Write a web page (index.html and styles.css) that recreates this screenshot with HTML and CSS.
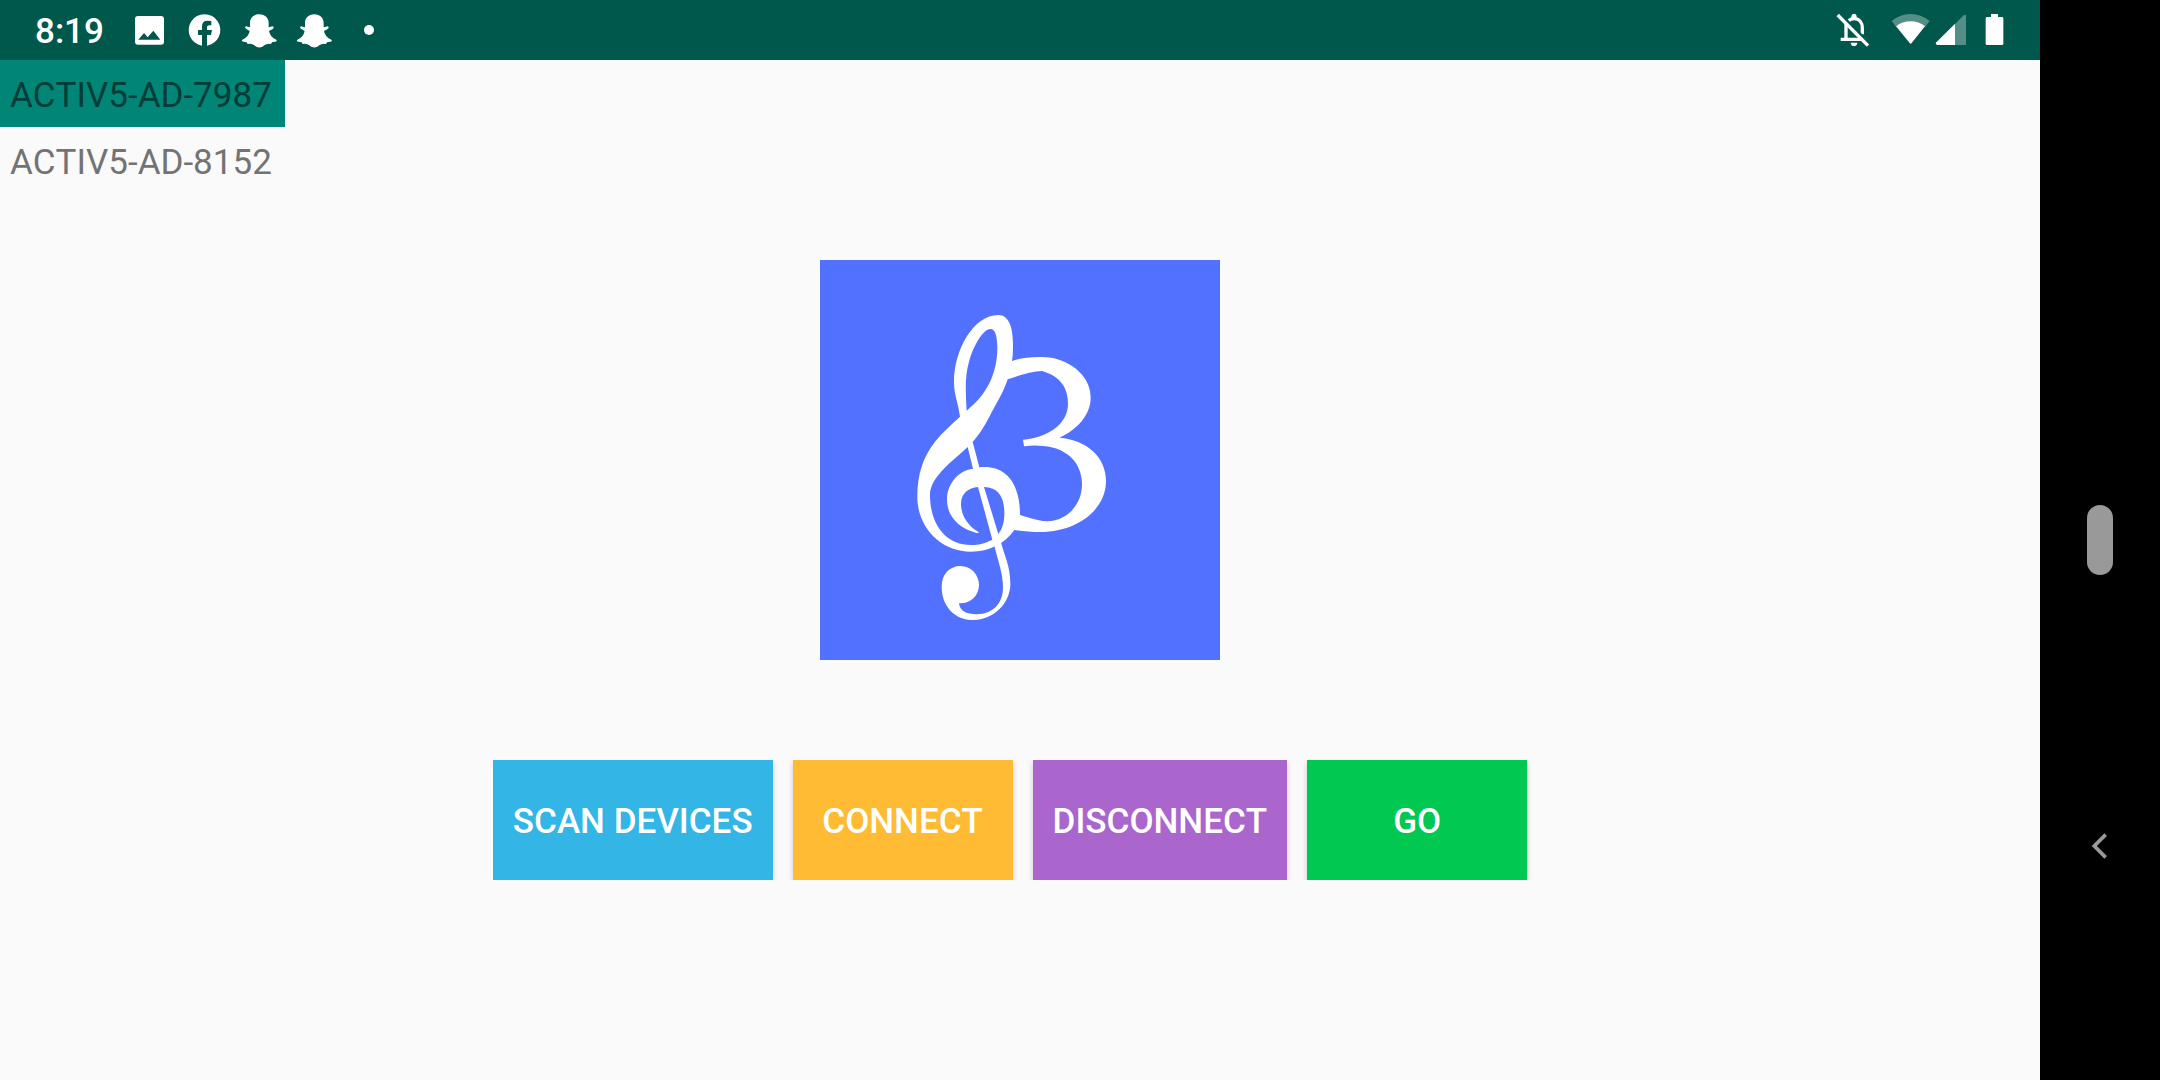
FILE: index.html
```html
<!DOCTYPE html>
<html lang="en">
<head>
    <meta charset="UTF-8">
    <meta name="viewport" content="width=device-width, initial-scale=1.0">
    <title>Activ5 Devices</title>
    <link rel="stylesheet" href="styles.css">
</head>
<body>

<div class="screen">
    <!-- Status bar -->
    <header class="status-bar">
        <span class="clock">8:19</span>
        <div class="notifications">
            <svg viewBox="366 0 165 180" aria-label="Picture">
                <path fill="#fff" fill-rule="evenodd" d="M414 48H483Q492 48 492 57V125Q492 134 483 134H414Q405 134 405 125V57Q405 48 414 48ZM415 119H481L460 92L443 112L432 99Z"/>
            </svg>
            <svg viewBox="531 0 165 180" aria-label="Facebook">
                <path fill="#fff" d="M606 137A47.500 47.500 0 1 1 621 137V105H633L636 90H621V83Q621 76 629 76H634V63Q628 62 622 62Q606 62 606 79V90H594V105H606Z"/>
            </svg>
            <svg viewBox="696 0 165 180" aria-label="Snapchat">
                <path fill="#fff" d="M778 43C761 43 750 54 750 69V82L738 79Q732 83 740 88L749 93C747 105 739 114 727 119Q723 123 730 125L740 127L743 132Q756 130 763 136C773 145 783 145 793 136Q800 130 813 132L816 127L826 125Q833 123 829 119C817 114 809 105 807 93L818 87Q824 82 818 79L806 82V69C806 54 795 43 778 43Z"/>
            </svg>
            <svg viewBox="696 0 165 180" aria-label="Snapchat">
                <path fill="#fff" d="M778 43C761 43 750 54 750 69V82L738 79Q732 83 740 88L749 93C747 105 739 114 727 119Q723 123 730 125L740 127L743 132Q756 130 763 136C773 145 783 145 793 136Q800 130 813 132L816 127L826 125Q833 123 829 119C817 114 809 105 807 93L818 87Q824 82 818 79L806 82V69C806 54 795 43 778 43Z"/>
            </svg>
            <svg viewBox="1026 0 165 180" aria-label="More">
                <circle cx="1107" cy="90" r="15" fill="#fff"/>
            </svg>
        </div>
        <div class="system">
            <svg class="bell" viewBox="100 0 120 180" aria-label="Notifications off">
                <path fill="none" stroke="#fff" stroke-width="10" d="M139 72V118M123 118H190M147 62Q154 56 163 56C180 56 188 69 188 84V103"/>
                <path fill="#fff" d="M155 58V48Q157 41 163 41Q170 41 171 48V58ZM153 128H173Q172 138 163 138Q154 138 153 128Z"/>
                <path stroke="#00574b" stroke-width="7" d="M122 42L213 133"/>
                <path stroke="#fff" stroke-width="10" d="M114 45L205 137"/>
            </svg>
            <svg class="wifi" viewBox="270 0 123 180" aria-label="Wifi">
                <path fill="#fff" opacity=".33" d="M275 63Q300 42 332 42Q363 42 389 63L375 81Q332 50 288 80Z"/>
                <path fill="#fff" d="M288 79Q307 64 332 64Q356 64 375 79L335 129Q332 133 329 129Z"/>
            </svg>
            <svg class="signal" viewBox="402 0 102 180" aria-label="Signal">
                <path fill="#fff" opacity=".33" d="M465 72L491 46Q498 41 498 48V135H465Z"/>
                <path fill="#fff" d="M465 71V135H412Q405 133 409 127Z"/>
            </svg>
            <svg class="battery" viewBox="546 0 75 180" aria-label="Battery">
                <path fill="#fff" d="M573 42H594V51H606Q610 51 610 55V131Q610 135 606 135H561Q557 135 557 131V55Q557 51 561 51H573Z"/>
            </svg>
        </div>
    </header>

    <main class="content">
        <!-- Found devices -->
        <div class="devices">
            <button class="device selected">ACTIV5-AD-7987</button>
            <button class="device">ACTIV5-AD-8152</button>
        </div>

        <div class="panel">
            <svg class="logo" viewBox="30 30 1200 1200" aria-label="Logo">
                <g fill="#fff">
                    <!-- upper loop and outer body of the clef -->
                    <path fill-rule="evenodd" d="M450 500C444 455 432 435 432 395C432 300 490 195 565 195C600 195 610 240 609 290Q609 315 606 333C630 325 655 321 685 321C720 321 740 325 765 336C810 357 842 395 842 443C842 495 800 540 748 563C830 570 888 620 888 693C888 780 800 846 692 846C665 846 640 843 613 840C585 880 540 905 482 905C395 905 322 835 322 740C322 670 340 620 375 575C397 547 425 523 450 500ZM470 482C530 435 563 370 562 290C561 255 555 237 541 237C520 237 492 285 479 328C463 380 467 430 470 482ZM593 388C582 423 563 454 545 487C529 518 512 550 488 576L508 652C580 644 630 690 630 795L660 804C680 809 695 814 711 814C770 813 816 765 816 703C816 632 763 588 686 587Q665 586 642 589L639 569C710 562 774 525 774 461C774 415 753 380 697 363C665 364 625 377 593 388ZM473 591C432 630 360 680 360 735C360 820 405 885 483 885C510 885 530 878 547 869L504 711C475 714 453 730 453 762C453 795 472 827 507 847Q505 850 497 848C450 835 411 803 411 748C411 700 448 660 489 656ZM522 711L565 852C576 838 583 820 583 790C583 740 565 712 522 711Z"/>
                    <!-- stem and tail -->
                    <path d="M547 869L573 878C585 920 601 950 601 1002C601 1060 550 1110 490 1110C435 1110 395 1070 395 1010C395 972 420 948 451 948C483 948 507 974 507 1005C507 1038 480 1062 447 1060C449 1082 468 1093 500 1093C550 1092 579 1060 579 1012C579 970 565 936 553 887Z"/>
                </g>
            </svg>
            <div class="actions">
                <button class="action scan">SCAN DEVICES</button>
                <button class="action connect">CONNECT</button>
                <button class="action disconnect">DISCONNECT</button>
                <button class="action go">GO</button>
            </div>
        </div>
    </main>
</div>

<!-- System navigation -->
<nav class="nav-bar">
    <button class="home" aria-label="Home"><span class="pill"></span></button>
    <button class="back" aria-label="Back">
        <svg viewBox="0 0 72 90">
            <path fill="none" stroke="#999" stroke-width="11" d="M53 11L19 45L53 79"/>
        </svg>
    </button>
</nav>

</body>
</html>
```

FILE: styles.css
```css
* {
    box-sizing: border-box;
}

body {
    margin: 0;
    min-height: 100vh;
    display: flex;
    background-color: #fafafa;
    font-family: Roboto, sans-serif;
    font-size: 35px;
    font-kerning: none;
}

button {
    margin: 0;
    border: none;
    font-family: inherit;
    font-size: inherit;
    font-kerning: inherit;
    cursor: pointer;
}

svg {
    display: block;
}

.screen {
    flex: 1;
    display: flex;
    flex-direction: column;
}

.status-bar {
    display: flex;
    align-items: center;
    height: 60px;
    padding: 0 33px 0 35px;
    background-color: #00574b;
    color: white;
}

.clock {
    width: 87px;
    padding-top: 2px;
    font-weight: 500;
}

.notifications {
    display: flex;
}

.notifications svg {
    width: 55px;
    height: 60px;
}

.system {
    display: flex;
    margin-left: auto;
}

.system svg {
    height: 60px;
}

.bell {
    width: 40px;
    margin-right: 17px;
}

.wifi {
    width: 41px;
    margin-right: 3px;
}

.signal {
    width: 34px;
    margin-right: 14px;
}

.battery {
    width: 25px;
}

/* device list and panel share one cell */
.content {
    flex: 1;
    display: grid;
}

.devices,
.panel {
    grid-area: 1 / 1;
}

.devices {
    display: flex;
    flex-direction: column;
    place-self: start;
    min-width: 285px;
    z-index: 1;
}

.device {
    padding: 12px 10px 8px;
    background-color: transparent;
    color: #737373;
    line-height: 47px;
    text-align: left;
}

.device.selected {
    background-color: #008577;
    color: #003d36;
}

.panel {
    display: flex;
    flex-direction: column;
    align-items: center;
    justify-content: center;
    gap: 100px;
}

.logo {
    width: 400px;
    height: 400px;
    background-color: #5271ff;
}

.actions {
    display: flex;
    overflow: hidden;
}

.action {
    min-width: 220px;
    height: 120px;
    margin-right: 20px;
    padding: 2px 20px 0;
    color: white;
    font-weight: 500;
    box-shadow: 0 2px 6px rgba(0, 0, 0, 0.2);
}

.scan {
    background-color: #33b5e5;
}

.connect {
    background-color: #ffbb33;
}

.disconnect {
    background-color: #aa66cc;
}

.go {
    background-color: #00c851;
}

.nav-bar {
    display: grid;
    grid-template-rows: repeat(3, 1fr);
    width: 120px;
    padding: 81px 0;
    background-color: black;
}

.nav-bar button {
    display: flex;
    align-items: center;
    justify-content: center;
    background-color: transparent;
}

.home {
    grid-row: 2;
}

.back {
    grid-row: 3;
}

.pill {
    width: 26px;
    height: 70px;
    border-radius: 13px;
    background-color: #999;
}

.back svg {
    width: 24px;
    height: 30px;
}
```
